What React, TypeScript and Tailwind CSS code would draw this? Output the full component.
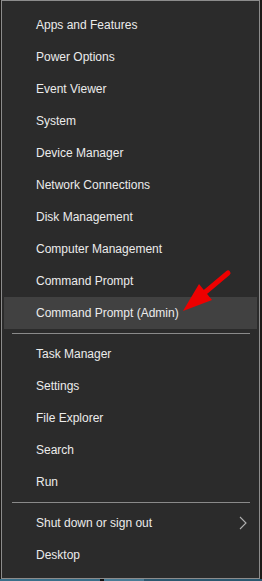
import React from 'react';

const topItems = [
  'Apps and Features',
  'Power Options',
  'Event Viewer',
  'System',
  'Device Manager',
  'Network Connections',
  'Disk Management',
  'Computer Management',
  'Command Prompt',
  'Command Prompt (Admin)',
];

const midItems = ['Task Manager', 'Settings', 'File Explorer', 'Search', 'Run'];

const MenuItem = ({ label, active, submenu }: { label: string; active?: boolean; submenu?: boolean }) => (
  <div
    className={`mx-[2px] h-[32px] flex items-center pl-[32px] pr-[9px] ${active ? 'bg-[#414141]' : ''}`}
  >
    <span className="flex-1 text-[12px] text-[#ececec] leading-none">{label}</span>
    {submenu && (
      <svg width="8" height="14" viewBox="0 0 8 14" className="mr-[1px]">
        <polyline points="1,1 7,7 1,13" fill="none" stroke="#b0b0b0" strokeWidth="1.1" />
      </svg>
    )}
  </div>
);

const Separator = () => <div className="my-[4px] ml-[10px] mr-[9px] h-px bg-[#8a8a8a]" />;

export default function App() {
  return (
    <div
      className="relative w-[262px] h-[581px] bg-[#1c1a18] overflow-hidden"
      style={{ fontFamily: '"Liberation Sans", Arial, sans-serif' }}
    >
      <div className="ml-[1px] w-[259px] h-[579px] border border-[#8c8c8c] bg-[#2b2b2b] pt-[8px]">
        {topItems.map((item, i) => (
          <MenuItem key={item} label={item} active={i === topItems.length - 1} />
        ))}
        <Separator />
        {midItems.map((item) => (
          <MenuItem key={item} label={item} />
        ))}
        <Separator />
        <MenuItem label="Shut down or sign out" submenu />
        <MenuItem label="Desktop" />
      </div>
      <div className="flex h-[2px]">
        <div className="w-[100px] bg-[#3a6f8a]" />
        <div className="w-[4px] bg-[#111]" />
        <div className="w-[40px] bg-[#4a7c96]" />
        <div className="flex-1 bg-[#2c5870]" />
      </div>

      {/* red arrow */}
      <svg className="absolute left-0 top-0 pointer-events-none" width="262" height="581">
        <line x1="228" y1="273" x2="203" y2="294" stroke="#ee0000" strokeWidth="5" strokeLinecap="round" />
        <polygon points="183,311 199,284 212,300" fill="#ee0000" />
      </svg>
    </div>
  );
}
